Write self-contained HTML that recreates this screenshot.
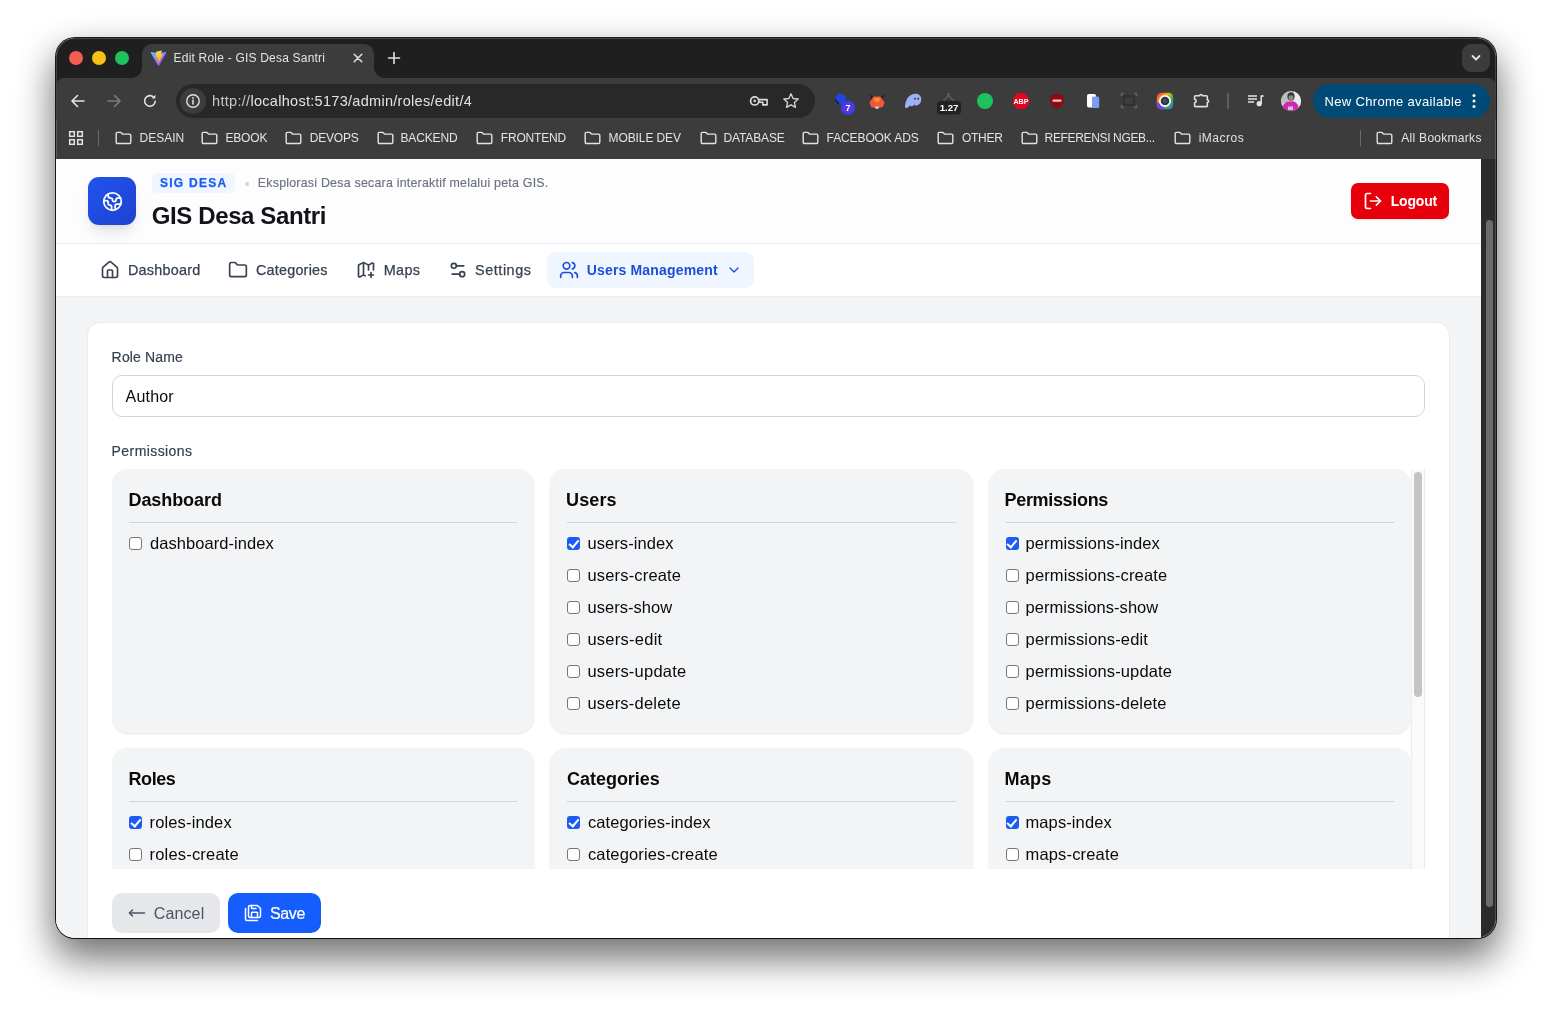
<!DOCTYPE html>
<html lang="en">
<head>
<meta charset="utf-8">
<title>Edit Role - GIS Desa Santri</title>
<style>
*{box-sizing:border-box;margin:0;padding:0}
html,body{width:1552px;height:1012px;overflow:hidden;background:#fff}
body{font-family:"Liberation Sans",sans-serif;position:relative;color:#111}
.abs{position:absolute}
.t{position:absolute;white-space:nowrap}
#win{position:absolute;left:56px;top:38px;width:1440px;height:900px;border-radius:19px;background:#f3f4f6;
 box-shadow:0 0 0 1px rgba(0,0,0,.88),0 15px 36px rgba(0,0,0,.37),0 21px 42px rgba(0,0,0,.32);}
#clip{will-change:transform;position:absolute;left:0;top:0;width:1440px;height:900px;border-radius:19px;overflow:hidden}
#tabstrip{left:0;top:0;width:1440px;height:84px;background:#1f1f1f}
#toolbar{left:1px;top:39.5px;width:1438px;height:43px;background:#3c3c3c;border-radius:6px 6px 0 0}
#bmbar{left:0;top:82px;width:1440px;height:39px;background:#3c3c3c}
.tl{width:14px;height:14px;border-radius:50%;top:13px}
#tab{left:86px;top:6px;width:232px;height:34px;background:#3c3c3c;border-radius:10px 10px 0 0}
#tab:before,#tab:after{content:"";position:absolute;bottom:0;width:10px;height:10px}
#tab:before{left:-10px;background:radial-gradient(circle at 0 0,transparent 9.5px,#3c3c3c 10px)}
#tab:after{right:-10px;background:radial-gradient(circle at 100% 0,transparent 9.5px,#3c3c3c 10px)}
.ct{color:#e3e3e3}
#url{left:120px;top:46px;width:639px;height:34px;border-radius:17px;background:#282828}
.bm{top:81px;height:38px;line-height:38px;font-size:12px;color:#e3e3e3}
.fold{top:93px}
#page{left:0;top:121px;width:1425px;height:779px;background:#f3f4f6;overflow:hidden}
#sbar{left:1425px;top:121px;width:15px;height:779px;background:#2b2b2b}
#sthumb{left:1429.5px;top:182px;width:7.5px;height:687px;border-radius:4px;background:#6b6b6b}
#hdr{left:0;top:0;width:1425px;height:85px;background:#fdfdfe;border-bottom:1px solid #e9ebf0}
#nav{left:0;top:85px;width:1425px;height:53px;background:#fff;border-bottom:1px solid #eceef2}
.nt{top:101px;font-size:14.4px;line-height:20px;color:#374151;-webkit-text-stroke:.25px #374151}
#logo{left:32px;top:18px;width:48px;height:48px;border-radius:11px;background:linear-gradient(135deg,#2253ee,#1e42cf);box-shadow:0 10px 15px -3px rgba(0,0,0,.1),0 4px 6px -4px rgba(0,0,0,.1)}
#card{left:31px;top:163px;width:1363px;height:640px;border-radius:13px;background:#fff;border:1px solid #e9ebf0}
.lbl{font-size:14px;line-height:20px;color:#374151;-webkit-text-stroke:.2px #374151}
#inp{left:56px;top:216px;width:1313px;height:42px;border-radius:10px;border:1px solid #d1d5db;background:#fff}
#grid{left:56px;top:310px;width:1313px;height:400px;overflow:hidden}
.pc{position:absolute;width:422.33px;height:264px;border-radius:16px;background:#f3f4f6;box-shadow:0 1px 3px rgba(0,0,0,.07),0 1px 2px rgba(0,0,0,.04)}
.pt{position:absolute;left:17.6px;top:17px;font-size:18px;line-height:28px;font-weight:700;color:#0a0a0a;white-space:nowrap}
.hr{position:absolute;left:17px;top:53px;width:388.33px;height:1px;background:#d1d5db}
.cb{position:absolute;left:17px;width:13px;height:13px;border-radius:3px;border:1px solid #767676;background:#fff}
.cb.on{border:0;background:#1d5cf3}
.cb.on:after{content:"";position:absolute;left:3.6px;top:1.4px;width:4.2px;height:7.6px;border:solid #fff;border-width:0 2px 2px 0;transform:rotate(40deg)}
.pl{position:absolute;left:38.5px;font-size:16.5px;line-height:24px;color:#0a0a0a;white-space:nowrap}
.btn{top:734px;height:40px;border-radius:10px}
</style>
</head>
<body>
<div id="win"><div id="clip">

  <div id="tabstrip" class="abs"></div>
  <div id="toolbar" class="abs"></div>
  <div id="bmbar" class="abs"></div>
  <div class="abs tl" style="left:13px;background:#f45d52"></div>
  <div class="abs tl" style="left:36px;background:#f8c113"></div>
  <div class="abs tl" style="left:59px;background:#1fc15e"></div>
  <div id="tab" class="abs"></div>
  <div id="url" class="abs"></div>
  <svg class="abs" style="left:93.5px;top:11.5px" width="17" height="17" viewBox="0 0 32 32"><defs><linearGradient id="vg1" x1="0" y1="0" x2="1" y2="1"><stop offset="0" stop-color="#6fb4ff"/><stop offset=".45" stop-color="#7a8cff"/><stop offset=".75" stop-color="#d03bf0"/><stop offset="1" stop-color="#e23ad0"/></linearGradient><linearGradient id="vg2" x1="0" y1="0" x2="0" y2="1"><stop offset="0" stop-color="#ffd84a"/><stop offset="1" stop-color="#f8b400"/></linearGradient></defs><path d="M30.6 5.2 16.9 29.7a.9.9 0 0 1-1.6 0L1.4 5.2a.9.9 0 0 1 1-1.300l13.700 2.400 13.500-2.400a.9.9 0 0 1 1 1.300z" fill="url(#vg1)"/><path d="M21.800 1.100 11.700 3.100a.4.4 0 0 0-.3.3l-.6 10.500a.4.4 0 0 0 .5.4l2.800-.7a.4.4 0 0 1 .5.5l-.8 4.100a.4.4 0 0 0 .5.4l1.700-.5a.4.4 0 0 1 .5.400l-1.300 6.400c-.1.4.4.6.7.3L24.200 8.200a.4.4 0 0 0-.4-.6l-2.900.6a.4.4 0 0 1-.4-.5l1.800-6.100a.4.4 0 0 0-.5-.500z" fill="url(#vg2)"/></svg>
  <div class="t ct" style="left:118.5px;top:12px;font-size:12px;line-height:16px;letter-spacing:0.203px;margin-left:-0.92px;">Edit Role - GIS Desa Santri</div>
  <svg class="abs" style="left:296px;top:14px" width="12" height="12" viewBox="0 0 12 12"><path d="M2.200 2.200l7.600 7.600M9.800 2.200l-7.600 7.600" stroke="#e3e3e3" stroke-width="1.500" stroke-linecap="round"/></svg>
  <svg class="abs" style="left:331px;top:13px" width="14" height="14" viewBox="0 0 14 14"><path d="M7 1.500v11M1.500 7h11" stroke="#e3e3e3" stroke-width="1.600" stroke-linecap="round"/></svg>
  <div class="abs" style="left:1406px;top:6px;width:28px;height:28px;border-radius:9px;background:#3c3c3c"></div>
  <svg class="abs" style="left:1414px;top:15px" width="12" height="10" viewBox="0 0 12 10"><path d="M2.500 3l3.500 3.500L9.500 3" fill="none" stroke="#e3e3e3" stroke-width="1.800" stroke-linecap="round" stroke-linejoin="round"/></svg>
  <svg class="abs" style="left:14px;top:55px" width="16" height="16" viewBox="0 0 16 16"><path d="M14 8H2.500M7.500 2.500 2 8l5.500 5.500" fill="none" stroke="#e3e3e3" stroke-width="1.600" stroke-linecap="round" stroke-linejoin="round"/></svg>
  <svg class="abs" style="left:50px;top:55px" width="16" height="16" viewBox="0 0 16 16"><path d="M2 8h11.500M8.500 2.500 14 8l-5.500 5.500" fill="none" stroke="#7d7d7d" stroke-width="1.600" stroke-linecap="round" stroke-linejoin="round"/></svg>
  <svg class="abs" style="left:86px;top:55px" width="16" height="16" viewBox="0 0 16 16"><path d="M13.200 8.300A5.300 5.300 0 1 1 11.700 4.200" fill="none" stroke="#e3e3e3" stroke-width="1.600" stroke-linecap="round"/><path d="M13.300 1.800v3.600H9.700z" fill="#e3e3e3"/></svg>
  <div class="abs" style="left:124px;top:50px;width:26px;height:26px;border-radius:13px;background:#3c3c3c"></div>
  <svg class="abs" style="left:129px;top:55px" width="16" height="16" viewBox="0 0 16 16"><circle cx="8" cy="8" r="6.200" fill="none" stroke="#e3e3e3" stroke-width="1.400"/><path d="M8 7.300v3.700" stroke="#e3e3e3" stroke-width="1.500" stroke-linecap="round"/><circle cx="8" cy="4.900" r=".9" fill="#e3e3e3"/></svg>
  <div class="t ct" style="left:157.1px;top:54px;font-size:14.500px;line-height:18px;letter-spacing:0.293px;margin-left:-1.03px;"><span style="color:#c4c7c5">http://</span>localhost:5173/admin/roles/edit/4</div>
  <svg class="abs" style="left:692px;top:55px" width="21" height="16" viewBox="0 0 21 16"><circle cx="6.700" cy="7.900" r="4.100" fill="none" stroke="#dcdcdc" stroke-width="1.700"/><circle cx="6.700" cy="7.900" r="1.300" fill="#cfcfcf"/><path d="M10.800 6.600h8.300v5.300h-4.300V9.200h-4" fill="none" stroke="#dcdcdc" stroke-width="1.600" stroke-linejoin="round"/></svg>
  <svg class="abs" style="left:726px;top:54px" width="18" height="18" viewBox="0 0 18 18"><path d="M9 1.800l2.100 4.700 5.100.5-3.800 3.400 1.100 5L9 12.800l-4.500 2.600 1.100-5L1.800 7l5.100-.5z" fill="none" stroke="#d4d4d4" stroke-width="1.350" stroke-linejoin="round"/></svg>
  <!-- extensions (coords relative to win: x-56,y-38) -->
  <svg class="abs" style="left:776px;top:52px" width="24" height="26" viewBox="0 0 24 26"><path d="M2 8.500 7.500 3l7 3.500-2 6.500-6 2z" fill="#2742e3"/><path d="M2 8.500l4.500 6.500 1-1.500L3.500 9z" fill="#1a1a1a"/><circle cx="16" cy="17.800" r="7.200" fill="#5a36dc"/><circle cx="16" cy="17.800" r="6.200" fill="none" stroke="#2a45e6" stroke-width="1.600"/><text x="16" y="21" font-family="Liberation Sans,sans-serif" font-weight="700" font-size="9" fill="#fff" text-anchor="middle">7</text></svg>
  <svg class="abs" style="left:812px;top:55px" width="18" height="17" viewBox="0 0 18 17"><path d="M1 1l5.500 3.500L4 7zM17 1l-5.500 3.500L14 7z" fill="#232323"/><path d="M5.500 3.500h7l4 6-1.500 4.500-4 .8H7l-4-.8L1.500 9.500z" fill="#f0563a"/><path d="M6 5h6l-1 4H7z" fill="#f7a023" opacity=".8"/><path d="M7 13.500h4l-.6 2.200H7.600z" fill="#d5d5d5"/></svg>
  <svg class="abs" style="left:848px;top:55px" width="18" height="16" viewBox="0 0 18 16"><path d="M1 14.500C1 6.500 5.500.8 11.500.8c3.800 0 5.800 2.500 5.800 5.500 0 4-2.800 6.200-5.200 6.200-1 0-1.500-.4-1.800-1-.6 1-1.700 1.800-2.800 1.800-.9 0-1.400-.5-1.500-1.100-.8 1.400-2.300 2.800-4 2.800-.6 0-1-.2-1-.5z" fill="#9db1f6"/><circle cx="11" cy="5.800" r="1" fill="#3c3c3c"/><circle cx="14.200" cy="5.800" r="1" fill="#3c3c3c"/></svg>
  <svg class="abs" style="left:880px;top:53px" width="26" height="24" viewBox="0 0 26 24"><path d="M7.500 9.500 12.500 4.500l5 5M12.500 4.500V2" fill="none" stroke="#5b5f66" stroke-width="1.300"/><circle cx="12.500" cy="3.500" r="1.500" fill="#5b5f66"/><rect x="1" y="10" width="24" height="13.500" rx="3.500" fill="#222"/><text x="13" y="20.300" font-family="Liberation Sans,sans-serif" font-weight="700" font-size="9.600" fill="#fff" text-anchor="middle">1.27</text></svg>
  <div class="abs" style="left:921px;top:55px;width:16px;height:16px;border-radius:8px;background:#1fc15e"></div>
  <svg class="abs" style="left:956px;top:54px" width="18" height="18" viewBox="0 0 18 18"><path d="M5.700 1h6.600L17 5.700v6.600L12.300 17H5.700L1 12.300V5.700z" fill="#e3051d"/><text x="9" y="11.700" font-family="Liberation Sans,sans-serif" font-weight="700" font-size="7.200" fill="#fff" text-anchor="middle">ABP</text></svg>
  <svg class="abs" style="left:993px;top:55px" width="16" height="16" viewBox="0 0 16 16"><path d="M8 .5 14.800 3v4.500c0 4-3 6.800-6.800 8-3.800-1.200-6.800-4-6.800-8V3z" fill="#8c0b10"/><rect x="3.500" y="6.500" width="9" height="2.200" rx=".6" fill="#efc3c3"/></svg>
  <svg class="abs" style="left:1030px;top:55px" width="14" height="16" viewBox="0 0 14 16"><rect x="1" y="1" width="9" height="13.500" rx="1.800" fill="#fff"/><rect x="6" y="3.500" width="7.200" height="11.500" rx="1.500" fill="#7b9cf5"/></svg>
  <svg class="abs" style="left:1064px;top:54px" width="18" height="17" viewBox="0 0 18 17"><path d="M1.500 4V1.500H4M14 1.500h2.500V4M16.500 13v2.500H14M4 15.500H1.500V13" fill="none" stroke="#616161" stroke-width="1.600"/><rect x="3.800" y="4" width="10.400" height="9" rx="1" fill="none" stroke="#2e2e2e" stroke-width="1.400"/></svg>
  <svg class="abs" style="left:1100px;top:54px" width="18" height="18" viewBox="0 0 18 18"><defs><linearGradient id="rb" x1="0" y1="0" x2="1" y2="1"><stop offset="0" stop-color="#e9205b"/><stop offset=".35" stop-color="#f6b40c"/><stop offset=".65" stop-color="#32b44a"/><stop offset="1" stop-color="#3b6cf0"/></linearGradient></defs><rect x=".8" y=".8" width="16.400" height="16.400" rx="4.500" fill="url(#rb)"/><path d="M.8 9v3.700a4.500 4.500 0 0 0 4.500 4.500H9z" fill="#7b3cf0"/><circle cx="9" cy="9" r="6" fill="#fff"/><circle cx="9" cy="9" r="4.300" fill="#33363b"/><circle cx="9" cy="9" r="2" fill="#3d4f78"/></svg>
  <svg class="abs" style="left:1136px;top:52px" width="20" height="20" viewBox="0 0 20 20"><path d="M3.400 5.800h4.300a1.300 1.300 0 0 1 2.600 0h4.200a.8.800 0 0 1 .8.800v3.300a1.300 1.300 0 0 1 0 2.600v3.300a.8.800 0 0 1-.8.800H3.400a.8.800 0 0 1-.8-.8v-3.100a1.600 1.600 0 0 0 0-3.200V6.600a.8.800 0 0 1 .8-.8z" fill="none" stroke="#dedede" stroke-width="1.600" stroke-linejoin="round"/></svg>
  <div class="abs" style="left:1171px;top:55px;width:2px;height:16px;border-radius:1px;background:#606060"></div>
  <svg class="abs" style="left:1190px;top:55px" width="18" height="16" viewBox="0 0 18 16"><path d="M2 3h9M2 6h9M2 9h6" stroke="#e3e3e3" stroke-width="1.500"/><path d="M15.200 2.600v8.400" stroke="#e3e3e3" stroke-width="1.500"/><path d="M15.200 3h2.300" stroke="#e3e3e3" stroke-width="1.800"/><circle cx="13.200" cy="10.700" r="2.600" fill="#e3e3e3"/></svg>
  <svg class="abs" style="left:1225px;top:53px" width="20" height="20" viewBox="0 0 20 20"><defs><clipPath id="av"><circle cx="10" cy="10" r="10"/></clipPath></defs><g clip-path="url(#av)"><rect width="20" height="20" fill="#d4d4d4"/><rect x="0" y="0" width="7" height="12" fill="#bdbdbd"/><rect x="13" y="0" width="7" height="20" fill="#ececec"/><ellipse cx="10" cy="5.500" rx="3.600" ry="4.200" fill="#3a3a3a"/><ellipse cx="10" cy="7" rx="2.500" ry="2.800" fill="#8a8a8a"/><path d="M1 20c0-6 3-9 6.500-9.500h5c3 .5 5.500 3.500 5.500 9.500z" fill="#d327b4"/><rect x="7" y="15.500" width="5" height="3.500" fill="#c9c9c9"/></g></svg>
  <div class="abs" style="left:1257px;top:46px;width:177px;height:34px;border-radius:17px;background:#004a77"></div>
  <div class="abs" style="left:1269.5px;top:55px;font-size:13px;line-height:18px;color:#fff;white-space:nowrap;letter-spacing:0.319px;margin-left:-0.91px;" id="newchrome">New Chrome available</div>
  <svg class="abs" style="left:1415px;top:54px" width="6" height="18" viewBox="0 0 6 18"><circle cx="3" cy="3.500" r="1.500" fill="#fff"/><circle cx="3" cy="9" r="1.500" fill="#fff"/><circle cx="3" cy="14.500" r="1.500" fill="#fff"/></svg>

  
  <svg class="abs" style="left:12px;top:92px" width="16" height="16" viewBox="0 0 16 16"><g fill="none" stroke="#e3e3e3" stroke-width="1.500"><rect x="1.700" y="1.700" width="4.600" height="4.600"/><rect x="9.700" y="1.700" width="4.600" height="4.600"/><rect x="1.700" y="9.700" width="4.600" height="4.600"/><rect x="9.700" y="9.700" width="4.600" height="4.600"/></g></svg>
  <div class="abs" style="left:42px;top:92px;width:1px;height:16px;background:#6a6a6a"></div>
  <div class="abs" style="left:1304px;top:92px;width:1px;height:16px;background:#6a6a6a"></div>
  <svg class="abs fold" style="left:59.2px" width="17" height="14" viewBox="0 0 17 14"><path d="M1.2 2.6c0-.7.5-1.200 1.200-1.200h3.500l1.600 1.700h7.100c.7 0 1.200.5 1.200 1.200v7c0 .7-.5 1.200-1.200 1.200H2.400c-.7 0-1.200-.5-1.200-1.200z" fill="none" stroke="#e3e3e3" stroke-width="1.400" stroke-linejoin="round"/></svg><div class="t bm" style="left:84.4px;letter-spacing:0.017px;margin-left:-0.94px;">DESAIN</div>
  <svg class="abs fold" style="left:145.3px" width="17" height="14" viewBox="0 0 17 14"><path d="M1.2 2.6c0-.7.5-1.200 1.200-1.200h3.500l1.600 1.700h7.100c.7 0 1.200.5 1.200 1.200v7c0 .7-.5 1.200-1.200 1.200H2.400c-.7 0-1.200-.5-1.200-1.200z" fill="none" stroke="#e3e3e3" stroke-width="1.400" stroke-linejoin="round"/></svg><div class="t bm" style="left:170.2px;letter-spacing:-0.192px;margin-left:-0.73px;">EBOOK</div>
  <svg class="abs fold" style="left:229.4px" width="17" height="14" viewBox="0 0 17 14"><path d="M1.2 2.6c0-.7.5-1.200 1.200-1.200h3.500l1.600 1.700h7.100c.7 0 1.200.5 1.200 1.200v7c0 .7-.5 1.200-1.200 1.200H2.400c-.7 0-1.200-.5-1.200-1.200z" fill="none" stroke="#e3e3e3" stroke-width="1.400" stroke-linejoin="round"/></svg><div class="t bm" style="left:254.6px;letter-spacing:-0.240px;margin-left:-0.76px;">DEVOPS</div>
  <svg class="abs fold" style="left:320.6px" width="17" height="14" viewBox="0 0 17 14"><path d="M1.2 2.6c0-.7.5-1.200 1.200-1.200h3.500l1.600 1.700h7.100c.7 0 1.200.5 1.200 1.200v7c0 .7-.5 1.200-1.200 1.200H2.400c-.7 0-1.200-.5-1.200-1.200z" fill="none" stroke="#e3e3e3" stroke-width="1.400" stroke-linejoin="round"/></svg><div class="t bm" style="left:345.4px;letter-spacing:-0.132px;margin-left:-0.94px;">BACKEND</div>
  <svg class="abs fold" style="left:420.4px" width="17" height="14" viewBox="0 0 17 14"><path d="M1.2 2.6c0-.7.5-1.200 1.200-1.200h3.500l1.600 1.700h7.100c.7 0 1.200.5 1.200 1.200v7c0 .7-.5 1.200-1.200 1.200H2.400c-.7 0-1.200-.5-1.200-1.200z" fill="none" stroke="#e3e3e3" stroke-width="1.400" stroke-linejoin="round"/></svg><div class="t bm" style="left:445.6px;letter-spacing:-0.194px;margin-left:-0.76px;">FRONTEND</div>
  <svg class="abs fold" style="left:528.0px" width="17" height="14" viewBox="0 0 17 14"><path d="M1.2 2.6c0-.7.5-1.200 1.200-1.200h3.500l1.600 1.700h7.100c.7 0 1.200.5 1.200 1.200v7c0 .7-.5 1.200-1.200 1.200H2.400c-.7 0-1.200-.5-1.200-1.200z" fill="none" stroke="#e3e3e3" stroke-width="1.400" stroke-linejoin="round"/></svg><div class="t bm" style="left:553.5px;letter-spacing:-0.105px;margin-left:-0.92px;">MOBILE DEV</div>
  <svg class="abs fold" style="left:643.6px" width="17" height="14" viewBox="0 0 17 14"><path d="M1.2 2.6c0-.7.5-1.200 1.200-1.200h3.500l1.600 1.700h7.100c.7 0 1.200.5 1.200 1.200v7c0 .7-.5 1.200-1.200 1.200H2.400c-.7 0-1.200-.5-1.200-1.200z" fill="none" stroke="#e3e3e3" stroke-width="1.400" stroke-linejoin="round"/></svg><div class="t bm" style="left:668.4px;letter-spacing:-0.124px;margin-left:-0.94px;">DATABASE</div>
  <svg class="abs fold" style="left:746.4px" width="17" height="14" viewBox="0 0 17 14"><path d="M1.2 2.6c0-.7.5-1.200 1.200-1.200h3.500l1.600 1.700h7.100c.7 0 1.200.5 1.200 1.200v7c0 .7-.5 1.200-1.200 1.200H2.400c-.7 0-1.200-.5-1.200-1.200z" fill="none" stroke="#e3e3e3" stroke-width="1.400" stroke-linejoin="round"/></svg><div class="t bm" style="left:771.3px;letter-spacing:-0.109px;margin-left:-0.71px;">FACEBOOK ADS</div>
  <svg class="abs fold" style="left:881.4px" width="17" height="14" viewBox="0 0 17 14"><path d="M1.2 2.6c0-.7.5-1.200 1.200-1.200h3.500l1.600 1.700h7.100c.7 0 1.200.5 1.200 1.200v7c0 .7-.5 1.200-1.200 1.200H2.400c-.7 0-1.200-.5-1.200-1.200z" fill="none" stroke="#e3e3e3" stroke-width="1.400" stroke-linejoin="round"/></svg><div class="t bm" style="left:906.3px;letter-spacing:-0.264px;margin-left:-0.40px;">OTHER</div>
  <svg class="abs fold" style="left:964.6px" width="17" height="14" viewBox="0 0 17 14"><path d="M1.2 2.6c0-.7.5-1.200 1.200-1.200h3.500l1.600 1.700h7.100c.7 0 1.200.5 1.200 1.200v7c0 .7-.5 1.200-1.200 1.200H2.400c-.7 0-1.200-.5-1.200-1.200z" fill="none" stroke="#e3e3e3" stroke-width="1.400" stroke-linejoin="round"/></svg><div class="t bm" style="left:989.5px;letter-spacing:-0.349px;margin-left:-0.92px;">REFERENSI NGEB...</div>
  <svg class="abs fold" style="left:1118.1px" width="17" height="14" viewBox="0 0 17 14"><path d="M1.2 2.6c0-.7.5-1.200 1.200-1.200h3.500l1.600 1.700h7.100c.7 0 1.200.5 1.200 1.200v7c0 .7-.5 1.200-1.200 1.200H2.400c-.7 0-1.200-.5-1.200-1.200z" fill="none" stroke="#e3e3e3" stroke-width="1.400" stroke-linejoin="round"/></svg><div class="t bm" style="left:1143.2px;letter-spacing:0.505px;margin-left:-0.56px;">iMacros</div>
  <svg class="abs fold" style="left:1320.4px" width="17" height="14" viewBox="0 0 17 14"><path d="M1.2 2.6c0-.7.5-1.200 1.200-1.200h3.500l1.600 1.700h7.100c.7 0 1.200.5 1.200 1.200v7c0 .7-.5 1.200-1.200 1.200H2.400c-.7 0-1.200-.5-1.200-1.200z" fill="none" stroke="#e3e3e3" stroke-width="1.400" stroke-linejoin="round"/></svg><div class="t bm" style="left:1345.3px;letter-spacing:0.284px;margin-left:-0.00px;">All Bookmarks</div>
  

  <div id="page" class="abs">

  <div id="hdr" class="abs"></div>
  <div id="logo" class="abs"></div>
  <svg class="abs" style="left:45.5px;top:31.5px" width="21" height="21" viewBox="0 0 24 24" fill="none" stroke="#fff" stroke-width="2" stroke-linecap="round" stroke-linejoin="round"><path d="M21.540 15H17a2 2 0 0 0-2 2v4.540"/><path d="M7 3.340V5a3 3 0 0 0 3 3a2 2 0 0 1 2 2c0 1.100.9 2 2 2a2 2 0 0 0 2-2c0-1.100.9-2 2-2h3.170"/><path d="M11 21.950V18a2 2 0 0 0-2-2a2 2 0 0 1-2-2v-1a2 2 0 0 0-2-2H2.050"/><circle cx="12" cy="12" r="10"/></svg>
  <div class="abs" style="left:96px;top:14px;width:83px;height:20px;border-radius:5px;background:#eff6ff"></div>
  <div class="t" style="left:104.5px;top:16px;font-size:12px;line-height:16px;font-weight:700;color:#1d5bf0;-webkit-text-stroke:.25px #1d5bf0;letter-spacing:1.266px;margin-left:-0.56px;">SIG DESA</div>
  <div class="abs" style="left:188.800px;top:23.300px;width:4px;height:4px;border-radius:2px;background:#cfd4dc"></div>
  <div class="t" style="left:202.7px;top:16px;font-size:12.4px;line-height:16px;color:#6b7280;-webkit-text-stroke:.15px #6b7280;letter-spacing:0.231px;margin-left:-0.90px;">Eksplorasi Desa secara interaktif melalui peta GIS.</div>
  <div class="t" style="left:96.2px;top:41px;font-size:24px;line-height:32px;font-weight:700;color:#111318;letter-spacing:-0.382px;margin-left:-0.44px;">GIS Desa Santri</div>
  <div class="abs" style="left:1295px;top:24px;width:98px;height:36px;border-radius:7px;background:#e7000b;box-shadow:0 1px 2px rgba(0,0,0,.12)"></div>
  <svg class="abs" style="left:1307px;top:32px" width="20" height="20" viewBox="0 0 24 24" fill="none" stroke="#fff" stroke-width="2" stroke-linecap="round" stroke-linejoin="round"><path d="m16 17 5-5-5-5"/><path d="M21 12H9"/><path d="M9 21H5a2 2 0 0 1-2-2V5a2 2 0 0 1 2-2h4"/></svg>
  <div class="t" style="left:1335px;top:32px;font-size:14px;line-height:20px;font-weight:700;color:#fff;letter-spacing:-0.176px;margin-left:-0.28px;">Logout</div>
  <div id="nav" class="abs"></div>
  <svg class="abs" style="left:44px;top:101px" width="20" height="20" viewBox="0 0 24 24" fill="none" stroke="#374151" stroke-width="2" stroke-linecap="round" stroke-linejoin="round"><path d="M15 21v-8a1 1 0 0 0-1-1h-4a1 1 0 0 0-1 1v8"/><path d="M3 10a2 2 0 0 1 .709-1.528l7-5.999a2 2 0 0 1 2.582 0l7 5.999A2 2 0 0 1 21 10v9a2 2 0 0 1-2 2H5a2 2 0 0 1-2-2z"/></svg>
  <div class="t nt" style="left:72.8px;letter-spacing:0.244px;margin-left:-0.88px;">Dashboard</div>
  <svg class="abs" style="left:172px;top:101px" width="20" height="20" viewBox="0 0 24 24" fill="none" stroke="#374151" stroke-width="2" stroke-linecap="round" stroke-linejoin="round"><path d="M20 20a2 2 0 0 0 2-2V8a2 2 0 0 0-2-2h-7.900a2 2 0 0 1-1.690-.9L9.600 3.900A2 2 0 0 0 7.930 3H4a2 2 0 0 0-2 2v13a2 2 0 0 0 2 2z"/></svg>
  <div class="t nt" style="left:200.4px;letter-spacing:0.224px;margin-left:-0.53px;">Categories</div>
  <svg class="abs" style="left:300px;top:101px" width="20" height="20" viewBox="0 0 24 24" fill="none" stroke="#374151" stroke-width="2" stroke-linecap="round" stroke-linejoin="round"><path d="m11 19-1.106-.552a2 2 0 0 0-1.788 0l-3.659 1.830A1 1 0 0 1 3 19.381V6.618a1 1 0 0 1 .553-.894l4.553-2.277a2 2 0 0 1 1.788 0l4.212 2.106a2 2 0 0 0 1.788 0l3.659-1.830A1 1 0 0 1 21 4.619V12"/><path d="M15 5.764V12"/><path d="M18 15v6"/><path d="M21 18h-6"/><path d="M9 3.236v15"/></svg>
  <div class="t nt" style="left:328.5px;letter-spacing:0.342px;margin-left:-0.81px;">Maps</div>
  <svg class="abs" style="left:392px;top:101px" width="20" height="20" viewBox="0 0 24 24" fill="none" stroke="#374151" stroke-width="2" stroke-linecap="round" stroke-linejoin="round"><path d="M14 17H5"/><path d="M19 7h-9"/><circle cx="17" cy="17" r="3"/><circle cx="7" cy="7" r="3"/></svg>
  <div class="t nt" style="left:420px;letter-spacing:0.546px;margin-left:-0.92px;">Settings</div>
  <div class="abs" style="left:491px;top:93px;width:207px;height:36px;border-radius:9px;background:#eff6ff"></div>
  <svg class="abs" style="left:503px;top:101px" width="20" height="20" viewBox="0 0 24 24" fill="none" stroke="#1d4ed8" stroke-width="2" stroke-linecap="round" stroke-linejoin="round"><path d="M16 21v-2a4 4 0 0 0-4-4H6a4 4 0 0 0-4 4v2"/><path d="M16 3.128a4 4 0 0 1 0 7.744"/><path d="M22 21v-2a4 4 0 0 0-3-3.870"/><circle cx="9" cy="7" r="4"/></svg>
  <div class="t" style="left:531.5px;top:101px;font-size:14px;line-height:20px;font-weight:700;color:#1d4ed8;letter-spacing:0.166px;margin-left:-0.79px;">Users Management</div>
  <svg class="abs" style="left:670px;top:103px" width="16" height="16" viewBox="0 0 24 24" fill="none" stroke="#1d4ed8" stroke-width="2" stroke-linecap="round" stroke-linejoin="round"><path d="m6 9 6 6 6-6"/></svg>
  <div id="card" class="abs"></div>
  <div class="t lbl" style="left:56.7px;top:188px;letter-spacing:0.159px;margin-left:-1.09px;">Role Name</div>
  <div id="inp" class="abs"></div>
  <div class="t" style="left:69.9px;top:226px;font-size:16px;line-height:24px;color:#0a0a0a;letter-spacing:0.198px;margin-left:-0.35px;">Author</div>
  <div class="t lbl" style="left:56.7px;top:282px;letter-spacing:0.413px;margin-left:-1.09px;">Permissions</div>
  <div id="grid" class="abs">
    <div class="pc" style="left:0px;top:0px"><div class="pt" style="letter-spacing:-0.078px;margin-left:-1.12px;">Dashboard</div><div class="hr"></div><div class="cb" style="top:68px"></div><div class="pl" style="top:62px;letter-spacing:0.055px;margin-left:-0.57px;">dashboard-index</div></div>
    <div class="pc" style="left:438.33px;top:0px"><div class="pt" style="letter-spacing:0.129px;margin-left:-1.91px;">Users</div><div class="hr"></div><div class="cb on" style="top:68px"></div><div class="pl" style="top:62px;letter-spacing:0.084px;margin-left:-1.42px;">users-index</div><div class="cb" style="top:100px"></div><div class="pl" style="top:94px;letter-spacing:0.172px;margin-left:-1.42px;">users-create</div><div class="cb" style="top:132px"></div><div class="pl" style="top:126px;letter-spacing:0.050px;margin-left:-1.42px;">users-show</div><div class="cb" style="top:164px"></div><div class="pl" style="top:158px;letter-spacing:0.253px;margin-left:-1.42px;">users-edit</div><div class="cb" style="top:196px"></div><div class="pl" style="top:190px;letter-spacing:0.221px;margin-left:-1.42px;">users-update</div><div class="cb" style="top:228px"></div><div class="pl" style="top:222px;letter-spacing:0.212px;margin-left:-1.42px;">users-delete</div></div>
    <div class="pc" style="left:876.67px;top:0px"><div class="pt" style="letter-spacing:-0.327px;margin-left:-1.72px;">Permissions</div><div class="hr"></div><div class="cb on" style="top:68px"></div><div class="pl" style="top:62px;letter-spacing:0.079px;margin-left:-1.57px;">permissions-index</div><div class="cb" style="top:100px"></div><div class="pl" style="top:94px;letter-spacing:0.124px;margin-left:-1.57px;">permissions-create</div><div class="cb" style="top:132px"></div><div class="pl" style="top:126px;letter-spacing:0.041px;margin-left:-1.57px;">permissions-show</div><div class="cb" style="top:164px"></div><div class="pl" style="top:158px;letter-spacing:0.145px;margin-left:-1.57px;">permissions-edit</div><div class="cb" style="top:196px"></div><div class="pl" style="top:190px;letter-spacing:0.141px;margin-left:-1.57px;">permissions-update</div><div class="cb" style="top:228px"></div><div class="pl" style="top:222px;letter-spacing:0.136px;margin-left:-1.57px;">permissions-delete</div></div>
    <div class="pc" style="left:0px;top:279px"><div class="pt" style="letter-spacing:-0.417px;margin-left:-1.12px;">Roles</div><div class="hr"></div><div class="cb on" style="top:68px"></div><div class="pl" style="top:62px;letter-spacing:0.143px;margin-left:-0.99px;">roles-index</div><div class="cb" style="top:100px"></div><div class="pl" style="top:94px;letter-spacing:0.188px;margin-left:-0.99px;">roles-create</div><div class="cb" style="top:132px"></div><div class="pl" style="top:126px;letter-spacing:0.000px;margin-left:0.00px;">roles-show</div><div class="cb" style="top:164px"></div><div class="pl" style="top:158px;letter-spacing:0.000px;margin-left:0.00px;">roles-edit</div></div>
    <div class="pc" style="left:438.33px;top:279px"><div class="pt" style="letter-spacing:-0.026px;margin-left:-0.92px;">Categories</div><div class="hr"></div><div class="cb on" style="top:68px"></div><div class="pl" style="top:62px;letter-spacing:0.099px;margin-left:-0.89px;">categories-index</div><div class="cb" style="top:100px"></div><div class="pl" style="top:94px;letter-spacing:0.136px;margin-left:-0.89px;">categories-create</div><div class="cb" style="top:132px"></div><div class="pl" style="top:126px;letter-spacing:0.000px;margin-left:0.00px;">categories-show</div><div class="cb" style="top:164px"></div><div class="pl" style="top:158px;letter-spacing:0.000px;margin-left:0.00px;">categories-edit</div></div>
    <div class="pc" style="left:876.67px;top:279px"><div class="pt" style="letter-spacing:0.244px;margin-left:-1.76px;">Maps</div><div class="hr"></div><div class="cb on" style="top:68px"></div><div class="pl" style="top:62px;letter-spacing:0.099px;margin-left:-1.66px;">maps-index</div><div class="cb" style="top:100px"></div><div class="pl" style="top:94px;letter-spacing:0.170px;margin-left:-1.66px;">maps-create</div><div class="cb" style="top:132px"></div><div class="pl" style="top:126px;letter-spacing:0.000px;margin-left:0.00px;">maps-show</div><div class="cb" style="top:164px"></div><div class="pl" style="top:158px;letter-spacing:0.000px;margin-left:0.00px;">maps-edit</div></div>
    
    <div class="abs" style="left:1299px;top:0;width:14px;height:400px;background:#fafafa;border-left:1px solid #ececec;border-right:1px solid #ececec"></div>
    <div class="abs" style="left:1302px;top:3px;width:8px;height:225px;border-radius:4px;background:#c4c4c4"></div>
  </div>
  <div class="abs btn" style="left:56px;width:108px;background:#e5e7eb"></div>
  <svg class="abs" style="left:72px;top:745px" width="18" height="18" viewBox="0 0 24 24" fill="none" stroke="#4b5563" stroke-width="2" stroke-linecap="round" stroke-linejoin="round"><path d="M6 8L2 12L6 16"/><path d="M2 12H22"/></svg>
  <div class="t" style="left:98.4px;top:743px;font-size:16px;line-height:24px;color:#4b5563;letter-spacing:0.134px;margin-left:-0.66px;">Cancel</div>
  <div class="abs btn" style="left:172px;width:93px;background:#155dfc"></div>
  <svg class="abs" style="left:188px;top:745px" width="18" height="18" viewBox="0 0 24 24" fill="none" stroke="#fff" stroke-width="2" stroke-linecap="round" stroke-linejoin="round"><path d="M10 2v3a1 1 0 0 0 1 1h5"/><path d="M18 18v-6a1 1 0 0 0-1-1h-6a1 1 0 0 0-1 1v6"/><path d="M18 22H4a2 2 0 0 1-2-2V6"/><path d="M8 18a2 2 0 0 1-2-2V4a2 2 0 0 1 2-2h9.172a2 2 0 0 1 1.414.586l2.828 2.828A2 2 0 0 1 22 6.828V16a2 2 0 0 1-2.010 2z"/></svg>
  <div class="t" style="left:214.6px;top:743px;font-size:16px;line-height:24px;color:#fff;-webkit-text-stroke:.2px #fff;letter-spacing:-0.398px;margin-left:-0.60px;">Save</div>

  </div>
  <div id="sbar" class="abs"></div>
  <div id="sthumb" class="abs"></div>
  <div class="abs" style="left:0;top:0;width:1440px;height:900px;border-radius:19px;box-shadow:inset 0 0 0 1px rgba(255,255,255,.16);pointer-events:none"></div>
</div></div>
</body>
</html>
